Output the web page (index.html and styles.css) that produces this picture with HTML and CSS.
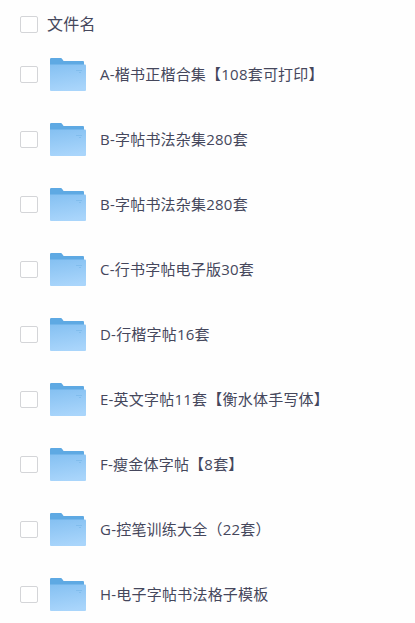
FILE: index.html
```html
<!DOCTYPE html>
<html lang="zh-CN">
<head>
    <meta charset="UTF-8">
    <meta name="viewport" content="width=device-width, initial-scale=1.0">
    <title>文件列表</title>
    <link rel="stylesheet" href="styles.css">
</head>
<body>
    <!-- Shared folder icon -->
    <svg class="sprite" aria-hidden="true">
        <defs>
            <linearGradient id="folder-front" x1="0.2" y1="0" x2="0.4" y2="1">
                <stop offset="0" stop-color="#86c1f2"/>
                <stop offset="1" stop-color="#a9d5fb"/>
            </linearGradient>
            <symbol id="folder" viewBox="0 0 36 33">
                <path d="M0 1.2 Q0 0 1.2 0 H10.8 Q11.6 0 12.2 .9 L13.6 3 H33 Q34 3 34 4 V20 H0 Z" fill="#5ea9e3"/>
                <path d="M0 6.5 H35 Q36 6.5 36 7.5 V32 Q36 33 35 33 H1 Q0 33 0 32 Z" fill="url(#folder-front)"/>
                <path d="M26 12.5 H32 M29 14.5 H31" stroke="#76b5e8" stroke-width=".6"/>
            </symbol>
        </defs>
    </svg>

    <div class="file-list">
        <div class="list-header">
            <input type="checkbox">
            <span class="title">文件名</span>
        </div>
        <label class="file-row">
            <input type="checkbox">
            <svg class="folder"><use href="#folder"/></svg>
            <span class="name">A-楷书正楷合集【108套可打印】</span>
        </label>
        <label class="file-row">
            <input type="checkbox">
            <svg class="folder"><use href="#folder"/></svg>
            <span class="name">B-字帖书法杂集280套</span>
        </label>
        <label class="file-row">
            <input type="checkbox">
            <svg class="folder"><use href="#folder"/></svg>
            <span class="name">B-字帖书法杂集280套</span>
        </label>
        <label class="file-row">
            <input type="checkbox">
            <svg class="folder"><use href="#folder"/></svg>
            <span class="name">C-行书字帖电子版30套</span>
        </label>
        <label class="file-row">
            <input type="checkbox">
            <svg class="folder"><use href="#folder"/></svg>
            <span class="name">D-行楷字帖16套</span>
        </label>
        <label class="file-row">
            <input type="checkbox">
            <svg class="folder"><use href="#folder"/></svg>
            <span class="name">E-英文字帖11套【衡水体手写体】</span>
        </label>
        <label class="file-row">
            <input type="checkbox">
            <svg class="folder"><use href="#folder"/></svg>
            <span class="name">F-瘦金体字帖【8套】</span>
        </label>
        <label class="file-row">
            <input type="checkbox">
            <svg class="folder"><use href="#folder"/></svg>
            <span class="name">G-控笔训练大全（22套）</span>
        </label>
        <label class="file-row">
            <input type="checkbox">
            <svg class="folder"><use href="#folder"/></svg>
            <span class="name">H-电子字帖书法格子模板</span>
        </label>
    </div>
</body>
</html>
```
FILE: styles.css
```css
body {
    margin: 0;
    height: 623px;
    overflow: hidden;
    background-color: #fefefe;
    color: #45475c;
    font-family: "Open Sans", "Noto Sans CJK SC", sans-serif;
    font-size: 15px;
}

.sprite {
    display: block;
    width: 0;
    height: 0;
}

.file-list {
    padding: 7px 20px 0;
}

.list-header,
.file-row {
    display: flex;
    align-items: center;
    white-space: nowrap;
}

.list-header {
    height: 35px;
}

.file-row {
    height: 65px;
    cursor: pointer;
}

input[type="checkbox"] {
    appearance: none;
    box-sizing: border-box;
    flex: none;
    width: 18px;
    height: 17px;
    margin: 0;
    border: 1px solid #d4d5d8;
    border-radius: 2px;
    background-color: #fff;
}

input[type="checkbox"]:checked {
    background-color: #5ba9e6;
}

.title {
    margin-left: 9px;
    padding-bottom: 3px;
    font-size: 16px;
    letter-spacing: 0.3px;
}

.name {
    padding-bottom: 2px;
    letter-spacing: 0.22px;
}

.folder {
    flex: none;
    width: 36px;
    height: 33px;
    margin: 0 14px 0 12px;
}
```
